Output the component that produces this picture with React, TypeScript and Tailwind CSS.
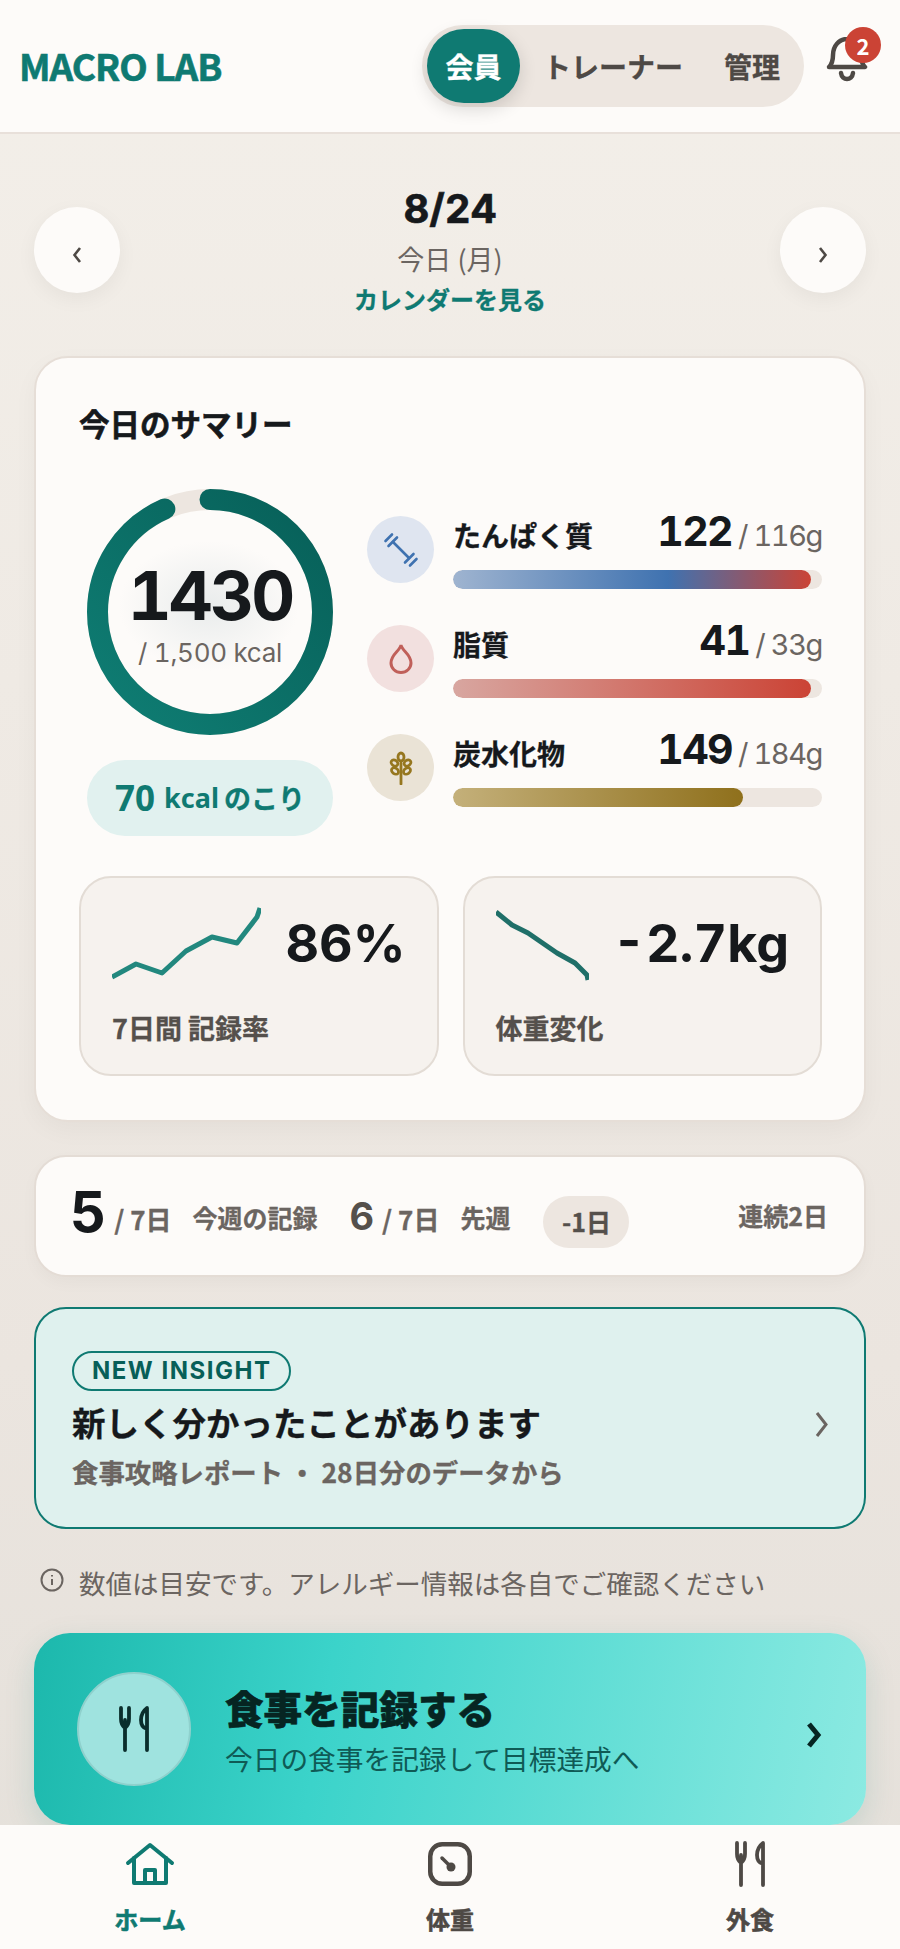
import { type JSX, type ReactNode } from 'react'

const num = "font-['Inter','Noto_Sans_CJK_JP',sans-serif] tabular-nums"
const heavy = '[-webkit-text-stroke:0.6px_currentColor]'
const semi = '[-webkit-text-stroke:0.3px_currentColor]'

function Dumbbell(): JSX.Element {
  return (
    <svg width="36" height="36" viewBox="0 0 36 36" fill="none" stroke="#3f72b0" strokeWidth="2.600" strokeLinecap="round">
      <path d="M10 10 26 26" />
      <path d="M5.500 14 14 5.500M2.500 9 9 2.500" />
      <path d="M22 30.500 30.500 22M27 33.500 33.500 27" />
    </svg>
  )
}

function Drop(): JSX.Element {
  return (
    <svg width="26" height="32" viewBox="0 0 26 32" fill="none" stroke="#c0605a" strokeWidth="3">
      <path d="M13 2c1 6 10 9 10 18a10 9.500 0 0 1-20 0C3 11 12 8 13 2Z" />
    </svg>
  )
}

function Wheat(): JSX.Element {
  return (
    <svg width="24" height="34" viewBox="0 0 24 34" fill="none" stroke="#96771f" strokeWidth="2.800" strokeLinecap="round">
      <path d="M12 12v21" />
      <ellipse cx="12" cy="6" rx="3" ry="4" />
      <ellipse cx="5.500" cy="12" rx="3.600" ry="2.800" transform="rotate(35 5.500 12)" />
      <ellipse cx="18.500" cy="12" rx="3.600" ry="2.800" transform="rotate(-35 18.500 12)" />
      <ellipse cx="6" cy="20" rx="3.800" ry="2.800" transform="rotate(35 6 20)" />
      <ellipse cx="18" cy="20" rx="3.800" ry="2.800" transform="rotate(-35 18 20)" />
    </svg>
  )
}

function Cutlery({ color }: { color: string }): JSX.Element {
  return (
    <svg width="32" height="46" viewBox="0 0 32 46" fill="none" stroke={color} strokeWidth="3.800" strokeLinecap="round" strokeLinejoin="round">
      <path d="M3 2v11c0 6 3 8 4 9M11 2v11c0 6-3 8-4 9M7 14v30" />
      <path d="M29 44V2c-4 3-6 8-6 12 0 5 2 8 6 9" />
    </svg>
  )
}

type Macro = {
  name: string
  value: number
  goal: string
  tint: string
  bar: string
  width: string
  icon: ReactNode
}

const macros: Macro[] = [
  {
    name: 'たんぱく質',
    value: 122,
    goal: '/ 116g',
    tint: 'bg-[#dfe5f0]',
    bar: 'bg-[linear-gradient(90deg,#9fb4d0_0%,#3f72b0_60%,#cb4335_100%)]',
    width: 'w-[97%]',
    icon: <Dumbbell />,
  },
  {
    name: '脂質',
    value: 41,
    goal: '/ 33g',
    tint: 'bg-[#f2e0df]',
    bar: 'bg-[linear-gradient(90deg,#d8a6a0_0%,#cb4335_100%)]',
    width: 'w-[97%]',
    icon: <Drop />,
  },
  {
    name: '炭水化物',
    value: 149,
    goal: '/ 184g',
    tint: 'bg-[#eae3d6]',
    bar: 'bg-[linear-gradient(90deg,#c4b07a_0%,#8f701c_100%)]',
    width: 'w-[78.500%]',
    icon: <Wheat />,
  },
]

function MacroRow({ m }: { m: Macro }): JSX.Element {
  return (
    <div className="flex h-[109px] items-start gap-[19px]">
      <div className={`mt-[8px] flex h-[67px] w-[67px] shrink-0 items-center justify-center rounded-full ${m.tint}`}>{m.icon}</div>
      <div className="min-w-0 flex-1">
        <div className="flex h-[54px] items-center justify-between">
          <span className={`text-[28px] font-bold text-[#16191c] ${semi}`}>{m.name}</span>
          <span className={`${num} mt-[-2px] flex items-baseline gap-[6px] text-[29px] tracking-[-1.400px] text-[#6b6561]`}>
            <b className="text-[41px] leading-none tracking-[-1.600px] text-[#16191c]">{m.value}</b>
            {m.goal}
          </span>
        </div>
        <div className="mt-[8px] h-[19px] overflow-hidden rounded-full bg-[#ede6e0]">
          <div className={`h-full rounded-full ${m.bar} ${m.width}`} />
        </div>
      </div>
    </div>
  )
}

function Ring(): JSX.Element {
  return (
    <div className="relative h-[246px] w-[246px]">
      <svg width="246" height="246" viewBox="0 0 246 246" className="absolute inset-0">
        <defs>
          <linearGradient id="ring" x1="0" y1="0" x2="1" y2="1">
            <stop offset="0" stopColor="#0f7e74" />
            <stop offset="1" stopColor="#075f58" />
          </linearGradient>
        </defs>
        <circle cx="123" cy="123" r="112.500" fill="none" stroke="#ede6e0" strokeWidth="21" />
        <circle
          cx="123"
          cy="123"
          r="112.500"
          fill="none"
          stroke="url(#ring)"
          strokeWidth="21"
          strokeLinecap="round"
          strokeDasharray="659.700 707"
          transform="rotate(-90 123 123)"
        />
      </svg>
      <div className="absolute inset-0 flex flex-col items-center justify-center">
        <div className="absolute left-[32px] top-[52px] h-[130px] w-[180px] rounded-full bg-[radial-gradient(closest-side,#e9ecec,transparent)]" />
        <span className={`${num} relative mt-[2px] text-[68px] font-bold leading-[76px] tracking-[-2.800px] text-[#16191c]`}>1430</span>
        <span className={`${num} relative mt-[3px] text-[26px] leading-[34px] tracking-[-0.300px] text-[#6b6561]`}>/ 1,500 kcal</span>
      </div>
    </div>
  )
}

function Spark({ points, color, width }: { points: string; color: string; width: number }): JSX.Element {
  return (
    <svg width={width} height="80" viewBox={`0 0 ${width} 80`} fill="none" stroke={color} strokeWidth="5" strokeLinejoin="round">
      <polyline points={points} />
    </svg>
  )
}

function Tile({ label, value, children }: { label: string; value: string; children: ReactNode }): JSX.Element {
  return (
    <div className="h-[200px] flex-1 rounded-[32px] border-2 border-[#e3dcd5] bg-[#f6f2ee] px-[31px] pt-[26px]">
      <div className="flex h-[80px] items-center justify-between">
        {children}
        <span className={`${num} text-[52px] font-bold leading-none text-[#16191c]`}>{value}</span>
      </div>
      <div className={`mt-[27px] text-[27px] font-bold leading-[34px] text-[#55504c] ${semi}`}>{label}</div>
    </div>
  )
}

function NavItem({ label, active, icon }: { label: string; active?: boolean; icon: ReactNode }): JSX.Element {
  return (
    <div className={`flex flex-1 flex-col items-center ${active ? 'text-[#0f7a72]' : 'text-[#4e4945]'}`}>
      <div className="flex h-[60px] items-center">{icon}</div>
      <span className={`mt-[8px] text-[24px] font-bold leading-[34px] ${heavy}`}>{label}</span>
    </div>
  )
}

export default function App(): JSX.Element {
  return (
    <div className="relative flex h-[1949px] w-[900px] flex-col overflow-hidden bg-[linear-gradient(180deg,#f3efe9_0%,#ebe5df_70%,#e4e0da_100%)] font-['Noto_Sans_CJK_JP','Noto_Sans',sans-serif]">
      <header className="flex h-[134px] shrink-0 items-center border-b-2 border-[#e8e0da] bg-[#fdfbf9] pl-[19px] pr-[32px]">
        <span className={`text-[37px] font-bold tracking-[-1px] text-[#0f7a72] ${heavy}`}>MACRO LAB</span>
        <div className="ml-auto flex h-[82px] w-[382px] items-center rounded-full bg-[#ede6e0] pl-[5px]">
          <span className={`flex h-[74px] w-[93px] items-center justify-center rounded-full bg-[#0f7a72] text-[28px] font-bold text-white shadow-[0_6px_18px_rgba(0,0,0,0.14)] ${semi}`}>
            会員
          </span>
          <span className={`ml-[23px] text-[28px] font-bold text-[#4e4945] ${semi}`}>トレーナー</span>
          <span className={`ml-[41px] text-[28px] font-bold text-[#4e4945] ${semi}`}>管理</span>
        </div>
        <div className="relative ml-[22px] mt-[-12px] h-[46px] w-[42px]">
          <svg width="42" height="46" viewBox="0 0 42 46" fill="none" stroke="#4e4945" strokeWidth="4.500" strokeLinecap="round" strokeLinejoin="round">
            <path d="M3 30c3-3 4-7 4-12 0-9 6-16 14-16s14 7 14 16c0 5 1 9 4 12Z" />
            <path d="M15 36c1 8 11 8 12 0" />
          </svg>
          <span className="absolute left-[19px] top-[-10px] flex h-[36px] w-[36px] items-center justify-center rounded-full bg-[#cb4335] text-[22px] font-bold text-white">
            2
          </span>
        </div>
      </header>

      <main className="flex min-h-0 flex-1 flex-col px-[34px]">
        <section className="flex h-[222px] shrink-0 items-start justify-between pt-[73px]">
          <button className="flex h-[86px] w-[86px] items-center justify-center rounded-full bg-[#fdfbf9] pt-[10px] text-[#4e4945] shadow-[0_6px_20px_rgba(0,0,0,0.05)]">
            <svg width="10" height="18" viewBox="0 0 10 18" fill="none" stroke="currentColor" strokeWidth="2.600"><path d="M8 2 2.500 9 8 16" /></svg>
          </button>
          <div className="mt-[-23px] flex flex-col items-center">
            <span className={`${num} text-[40px] font-bold leading-[50px] text-[#16191c] ${heavy}`}>8/24</span>
            <span className="mt-[5px] text-[27px] leading-[40px] text-[#6b6561]">今日 (月)</span>
            <span className={`mt-[4px] text-[24px] font-bold leading-[32px] text-[#0f7a72] ${semi}`}>カレンダーを見る</span>
          </div>
          <button className="flex h-[86px] w-[86px] items-center justify-center rounded-full bg-[#fdfbf9] pt-[10px] text-[#4e4945] shadow-[0_6px_20px_rgba(0,0,0,0.05)]">
            <svg width="10" height="18" viewBox="0 0 10 18" fill="none" stroke="currentColor" strokeWidth="2.600"><path d="M2 2l5.500 7L2 16" /></svg>
          </button>
        </section>

        <section className="h-[766px] shrink-0 rounded-[34px] border-2 border-[#e6ded7] bg-[#fdfbf9] pl-[43px] pr-[42px] pt-[44px] shadow-[0_8px_24px_rgba(0,0,0,0.04)]">
          <h2 className={`text-[30.500px] font-bold leading-[42px] text-[#16191c] ${heavy}`}>今日のサマリー</h2>
          <div className="mt-[45px] flex h-[352px]">
            <div className="ml-[8px] w-[246px] shrink-0">
              <Ring />
              <div className="mt-[25px] flex h-[76px] items-center justify-center rounded-full bg-[#e1f1ef] font-bold text-[#0f7a72]">
                <span className="font-['Noto_Sans',sans-serif] text-[35px]">70</span>
                <span className="ml-[9px] font-['Noto_Sans',sans-serif] text-[27px]">kcal</span>
                <span className={`ml-[5px] text-[27px] ${semi}`}>のこり</span>
              </div>
            </div>
            <div className="ml-[34px] min-w-0 flex-1 pt-[19px]">
              {macros.map((m) => (
                <MacroRow key={m.name} m={m} />
              ))}
            </div>
          </div>
          <div className="mt-[35px] flex gap-[24px]">
            <Tile label="7日間 記録率" value="86%">
              <Spark width={149} color="#22887e" points="0,73 24,60 50,69 74,47 100,33 125,39 145,13 148,4" />
            </Tile>
            <Tile label="体重変化" value="-2.7kg">
              <Spark width={93} color="#1f6f68" points="0,8 16,21 32,29 61,49 79,59 91,71 92,76" />
            </Tile>
          </div>
        </section>

        <section className={`mt-[33px] flex h-[122px] shrink-0 items-center rounded-[32px] border-2 border-[#e4dcd5] bg-[#fdfbf9] pl-[34px] pr-[36px] text-[#6b6561] shadow-[0_6px_16px_rgba(0,0,0,0.03)]`}>
          <b className={`${num} mt-[-8px] text-[56px] leading-none text-[#16191c]`}>5</b>
          <span className={`ml-[8px] mt-[4px] text-[26px] font-bold ${semi}`}>/ 7日</span>
          <span className={`ml-[21px] mt-[4px] text-[25px] font-bold ${semi}`}>今週の記録</span>
          <b className={`${num} ml-[32px] text-[38px] leading-none text-[#55504c]`}>6</b>
          <span className={`ml-[8px] mt-[4px] text-[26px] font-bold ${semi}`}>/ 7日</span>
          <span className={`ml-[21px] mt-[4px] text-[25px] font-bold ${semi}`}>先週</span>
          <span className={`ml-[33px] mt-[12px] flex h-[52px] w-[86px] items-center justify-center rounded-[26px] bg-[#ede6e0] text-[25px] font-bold text-[#55504c] ${semi}`}>-1日</span>
          <span className={`ml-auto text-[25px] font-bold ${semi}`}>連続2日</span>
        </section>

        <section className="mt-[30px] flex h-[222px] shrink-0 items-center justify-between rounded-[32px] border-2 border-[#0f7a72] bg-[#dff1ee] pl-[36px] pr-[36px] pt-[8px]">
          <div>
            <span className="inline-flex h-[40px] items-center rounded-[20px] border-2 border-[#0f7a72] px-[18px] font-['Inter',sans-serif] text-[24px] font-bold tracking-[1.500px] text-[#075f58]">
              NEW INSIGHT
            </span>
            <div className={`mt-[6px] text-[33.500px] font-bold leading-[50px] text-[#16191c] ${semi}`}>新しく分かったことがあります</div>
            <div className={`mt-[4px] text-[26.400px] font-bold leading-[42px] text-[#6b6561] ${semi}`}>食事攻略レポート ・ 28日分のデータから</div>
          </div>
          <svg width="13" height="27" viewBox="0 0 13 27" fill="none" stroke="#6b6561" strokeWidth="3" className="mt-[4px]"><path d="M2 2l9 11.500-9 11.500" /></svg>
        </section>

        <div className="mt-[26px] flex h-[56px] shrink-0 items-center pl-[6px] text-[26.500px] text-[#6b6561]">
          <svg width="24" height="24" viewBox="0 0 24 24" fill="none" stroke="currentColor" strokeWidth="2" className="mt-[-7px]">
            <circle cx="12" cy="12" r="10.500" />
            <path d="M12 11v6M12 7v1.500" />
          </svg>
          <span className="ml-[15px]">数値は目安です。アレルギー情報は各自でご確認ください</span>
        </div>

        <section className="mt-[22px] flex h-[192px] shrink-0 items-center rounded-[36px] bg-[linear-gradient(100deg,#1cb8ac_0%,#3bd3ca_35%,#8ceae2_100%)] pl-[43px] pr-[44px] shadow-[0_10px_30px_rgba(15,122,114,0.15)]">
          <div className="flex h-[114px] w-[114px] items-center justify-center rounded-full border-2 border-[#8fd1cd] bg-[#9fe3df]">
            <Cutlery color="#0a2e2c" />
          </div>
          <div className="ml-[34px] flex-1">
            <div className={`text-[38.600px] font-black leading-[54px] text-[#062522] ${heavy}`}>食事を記録する</div>
            <div className="mt-[4px] text-[27.700px] leading-[40px] text-[#0f5a55]">今日の食事を記録して目標達成へ</div>
          </div>
          <svg width="16" height="28" viewBox="0 0 16 28" fill="none" stroke="#062522" strokeWidth="5" className="mt-[12px]"><path d="M3 3l9 11-9 11" /></svg>
        </section>
      </main>

      <nav className="flex h-[124px] shrink-0 items-start bg-[#fdfbf9] pt-[9px]">
        <NavItem
          active
          label="ホーム"
          icon={
            <svg width="50" height="44" viewBox="0 0 50 44" fill="none" stroke="currentColor" strokeWidth="4" strokeLinecap="round" strokeLinejoin="round">
              <path d="M3 21 25 3l22 18" />
              <path d="M9 16v25h32V16" />
              <path d="M20 41V28h10v13" />
            </svg>
          }
        />
        <NavItem
          label="体重"
          icon={
            <svg width="44" height="44" viewBox="0 0 44 44" fill="none" stroke="currentColor" strokeWidth="4.500">
              <rect x="2.250" y="2.250" width="39.500" height="39.500" rx="12" />
              <path d="M14 16l8 8" strokeWidth="3.500" strokeLinecap="round" />
              <circle cx="23" cy="25" r="4.500" fill="currentColor" stroke="none" />
            </svg>
          }
        />
        <NavItem label="外食" icon={<Cutlery color="#4e4945" />} />
      </nav>
    </div>
  )
}
